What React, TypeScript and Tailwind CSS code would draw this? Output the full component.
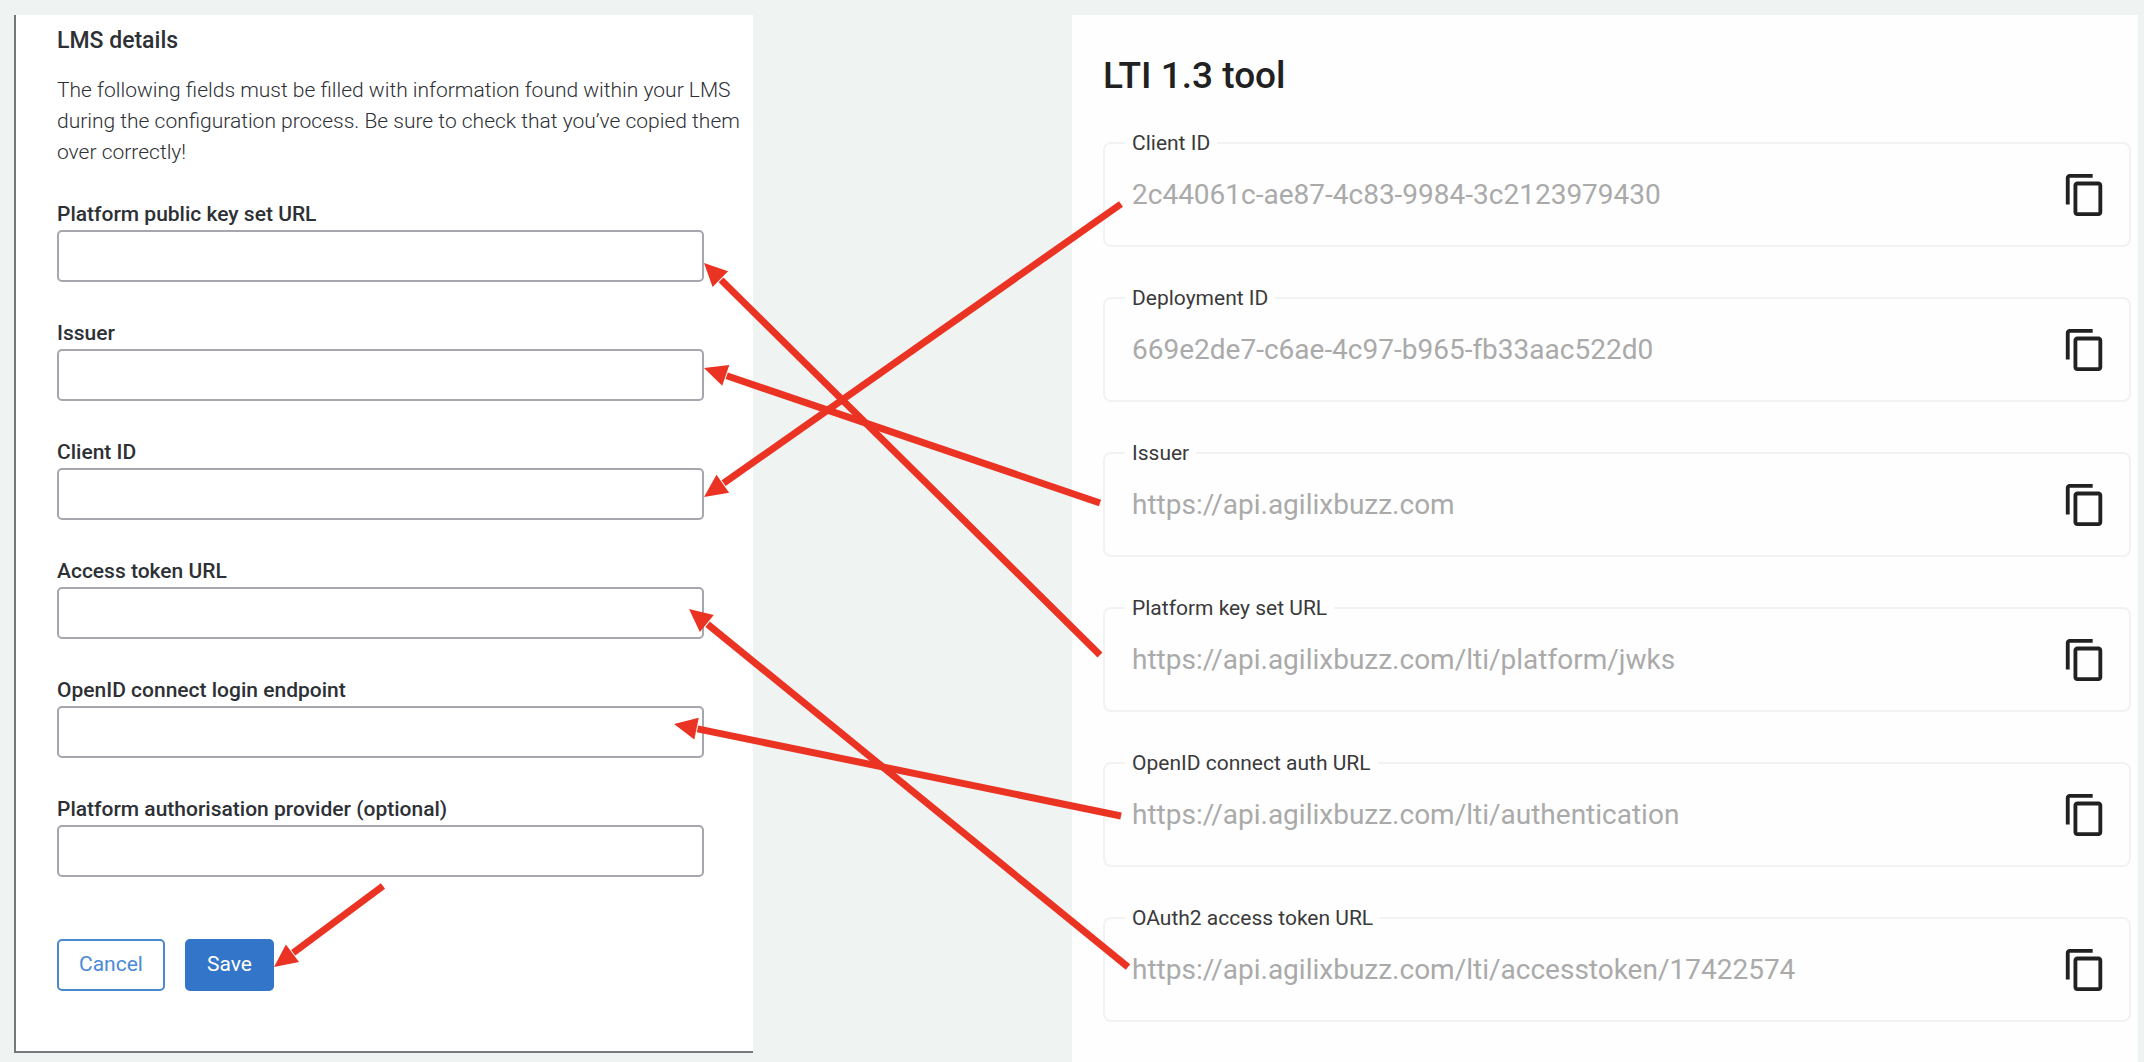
type Field = { id: string; label: string; value?: string };
type Arrow = { from: [number, number]; to: [number, number] };

const lmsFields: Field[] = [
  { id: "lms-keyset", label: "Platform public key set URL" },
  { id: "lms-issuer", label: "Issuer" },
  { id: "lms-client", label: "Client ID" },
  { id: "lms-token", label: "Access token URL" },
  { id: "lms-login", label: "OpenID connect login endpoint" },
  { id: "lms-provider", label: "Platform authorisation provider (optional)" },
];

const toolFields: Field[] = [
  { id: "tool-client", label: "Client ID", value: "2c44061c-ae87-4c83-9984-3c2123979430" },
  { id: "tool-deployment", label: "Deployment ID", value: "669e2de7-c6ae-4c97-b965-fb33aac522d0" },
  { id: "tool-issuer", label: "Issuer", value: "https://api.agilixbuzz.com" },
  { id: "tool-keyset", label: "Platform key set URL", value: "https://api.agilixbuzz.com/lti/platform/jwks" },
  { id: "tool-auth", label: "OpenID connect auth URL", value: "https://api.agilixbuzz.com/lti/authentication" },
  { id: "tool-token", label: "OAuth2 access token URL", value: "https://api.agilixbuzz.com/lti/accesstoken/17422574" },
];

const arrows: Arrow[] = [
  { from: [1100, 655], to: [704, 263] },
  { from: [1100, 503], to: [704, 368] },
  { from: [1121, 204], to: [704, 497] },
  { from: [1128, 967], to: [689, 609] },
  { from: [1121, 816], to: [674, 724] },
  { from: [383, 886], to: [274, 967] },
];

const HEAD_LENGTH = 23;
const HEAD_HALF_WIDTH = 11;

function ArrowShape({ from, to }: Arrow) {
  const dx = from[0] - to[0];
  const dy = from[1] - to[1];
  const length = Math.hypot(dx, dy);
  const ux = dx / length;
  const uy = dy / length;
  const bx = to[0] + ux * HEAD_LENGTH;
  const by = to[1] + uy * HEAD_LENGTH;
  const head = [
    to,
    [bx - uy * HEAD_HALF_WIDTH, by + ux * HEAD_HALF_WIDTH],
    [bx + uy * HEAD_HALF_WIDTH, by - ux * HEAD_HALF_WIDTH],
  ];
  return (
    <g>
      <polygon points={head.map((p) => p.join(",")).join(" ")} fill="#eb3323" />
      <line x1={bx + ux} y1={by + uy} x2={from[0]} y2={from[1]} stroke="#eb3323" strokeWidth="7" />
    </g>
  );
}

function CopyIcon() {
  return (
    <svg viewBox="0 0 24 24" className="size-[46px]" fill="#212121" aria-hidden="true">
      <path d="M16 1H4c-1.1 0-2 .9-2 2v14h2V3h12V1zm3 4H8c-1.1 0-2 .9-2 2v14c0 1.1.9 2 2 2h11c1.1 0 2-.9 2-2V7c0-1.1-.9-2-2-2zm0 16H8V7h11v14z" />
    </svg>
  );
}

function LmsPanel() {
  return (
    <section className="mb-[9px] border-b-2 border-l-2 border-[#77777c] bg-white pt-[10px] pb-[58px] pl-[41px] text-[#2d3035]">
      <h2 className="text-[23px] leading-8 font-medium">LMS details</h2>
      <p className="mt-[18px] pr-1 text-[21px] leading-[31px] font-light">
        The following fields must be filled with information found within your LMS during the
        configuration process. Be sure to check that you’ve copied them over correctly!
      </p>
      <form className="mt-[31px] pr-[49px]" onSubmit={(e) => e.preventDefault()}>
        <div className="flex flex-col gap-9">
          {lmsFields.map((f) => (
            <div key={f.id}>
              <label htmlFor={f.id} className="block text-[21px] leading-[31px] font-medium">
                {f.label}
              </label>
              <input
                id={f.id}
                type="text"
                className="block h-[52px] w-full rounded-[5px] border-2 border-[#a5a6ae] bg-white px-3 text-[21px]"
              />
            </div>
          ))}
        </div>
        <div className="mt-[62px] flex gap-5 text-[21px]">
          <button type="button" className="h-[52px] rounded-[5px] border-2 border-[#4a88d0] px-5 text-[#4a8ad6]">
            Cancel
          </button>
          <button type="submit" className="h-[52px] rounded-[5px] bg-[#3375c8] px-[22px] text-white">
            Save
          </button>
        </div>
      </form>
    </section>
  );
}

function ToolPanel() {
  return (
    <section className="bg-[#fefefe] pt-[37px] pr-[7px] pb-10 pl-[31px]">
      <h1 className="text-[37px] leading-[48px] font-medium text-[#212121]">LTI 1.3 tool</h1>
      <div className="mt-[31px] flex flex-col gap-[39px]">
        {toolFields.map((f) => (
          <fieldset key={f.id} className="min-w-0 rounded-lg border-2 border-[#f2f2f2] pb-[10px]">
            <legend className="ml-5 px-[7px] text-[21px] leading-6 text-[#3a3a3a]">
              <label htmlFor={f.id}>{f.label}</label>
            </legend>
            <div className="flex h-20 items-center pr-[21px] pl-[27px]">
              <input
                id={f.id}
                type="text"
                readOnly
                value={f.value}
                className="h-12 min-w-0 flex-1 bg-transparent pb-0.5 text-[28px] text-[#aaaaaa] outline-none"
              />
              <button type="button" aria-label={`Copy ${f.label}`}>
                <CopyIcon />
              </button>
            </div>
          </fieldset>
        ))}
      </div>
    </section>
  );
}

export default function App() {
  return (
    <main className="relative min-h-screen bg-[#eff3f2] font-[Roboto,sans-serif]">
      <div className="grid grid-cols-[739fr_319fr_1066fr] pt-[15px] pr-[6px] pl-[14px]">
        <LmsPanel />
        <div />
        <ToolPanel />
      </div>
      <svg
        viewBox="0 0 2144 1062"
        preserveAspectRatio="none"
        className="pointer-events-none absolute top-0 left-0 h-[1062px] w-full"
        aria-hidden="true"
      >
        {arrows.map((a) => (
          <ArrowShape key={a.from.join()} {...a} />
        ))}
      </svg>
    </main>
  );
}
